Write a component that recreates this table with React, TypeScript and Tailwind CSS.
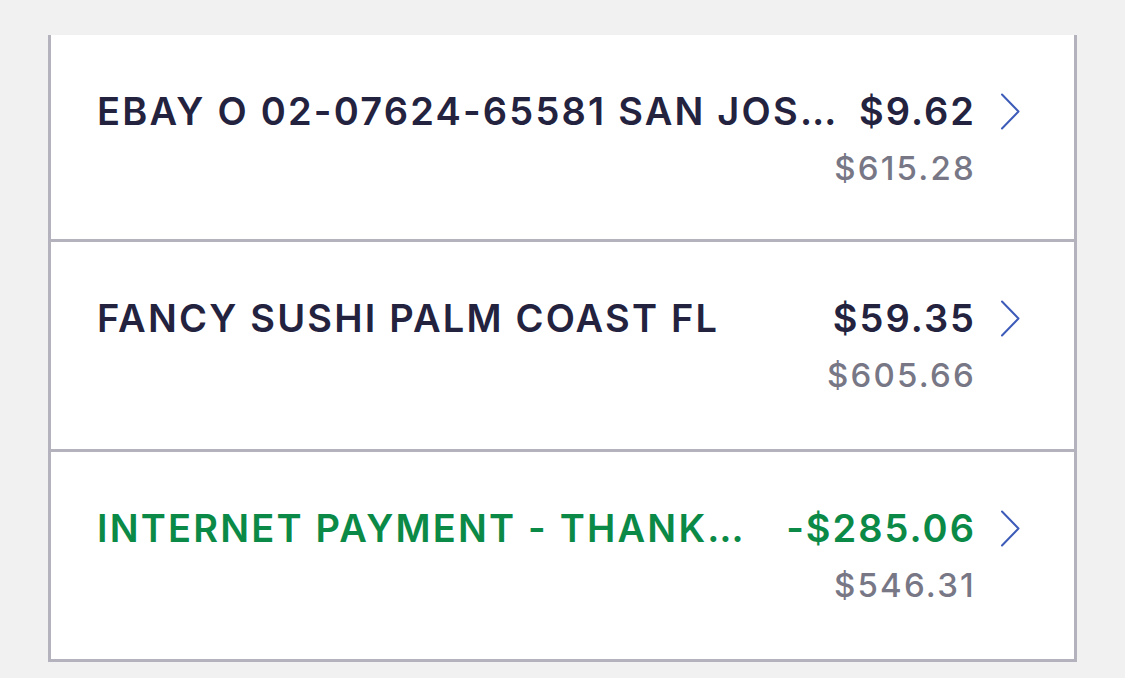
import React from "react";

type Tx = { title: string; amount: string; balance: string; credit?: boolean; h: string };

const rows: Tx[] = [
  { title: "EBAY O 02-07624-65581 SAN JOS\u2026", amount: "$9.62", balance: "$615.28", h: "h-[204px]" },
  { title: "FANCY SUSHI PALM COAST FL", amount: "$59.35", balance: "$605.66", h: "h-[210px]" },
  { title: "INTERNET PAYMENT - THANK\u2026", amount: "-$285.06", balance: "$546.31", credit: true, h: "h-[210px]" },
];

function Chevron() {
  return (
    <svg width="20" height="37" viewBox="0 0 20 37" className="shrink-0">
      <path d="M2 1.5 L18.5 18.5 L2 35.5" fill="none" stroke="#3d5bb8" strokeWidth="2" strokeLinecap="round" strokeLinejoin="round" />
    </svg>
  );
}

export default function App() {
  return (
    <div
      className="w-[1125px] h-[678px] bg-[#f1f1f1] pt-[35px] pl-[48px] overflow-hidden"
      style={{ fontFamily: "Inter, 'Noto Sans', sans-serif" }}
    >
      <div className="w-[1029px] bg-white border-x-[3px] border-b-[3px] border-[#b4b3bd]">
        {rows.map((r, i) => (
          <div
            key={i}
            className={`${r.h} ${i > 0 ? "border-t-[3px] border-[#b4b3bd]" : ""} flex items-start pl-[46px] pr-[54px] pt-[53px]`}
          >
            <div
              className={`flex-1 min-w-0 whitespace-nowrap text-[38px] leading-[46px] font-semibold tracking-[2.2px] ${
                r.credit ? "text-[#0b8a47]" : "text-[#24233f]"
              }`}
            >
              {r.title}
            </div>
            <div className="flex flex-col items-end ml-[8px] shrink-0">
              <div
                className={`text-[38px] leading-[46px] font-semibold tracking-[2px] ${
                  r.credit ? "text-[#0b8a47]" : "text-[#24233f]"
                }`}
              >
                {r.amount}
              </div>
              <div className="mt-[14px] text-[33px] leading-[40px] font-medium tracking-[2.2px] text-[#777786]">
                {r.balance}
              </div>
            </div>
            <div className="ml-[24px] mt-[5px] shrink-0">
              <Chevron />
            </div>
          </div>
        ))}
      </div>
    </div>
  );
}
